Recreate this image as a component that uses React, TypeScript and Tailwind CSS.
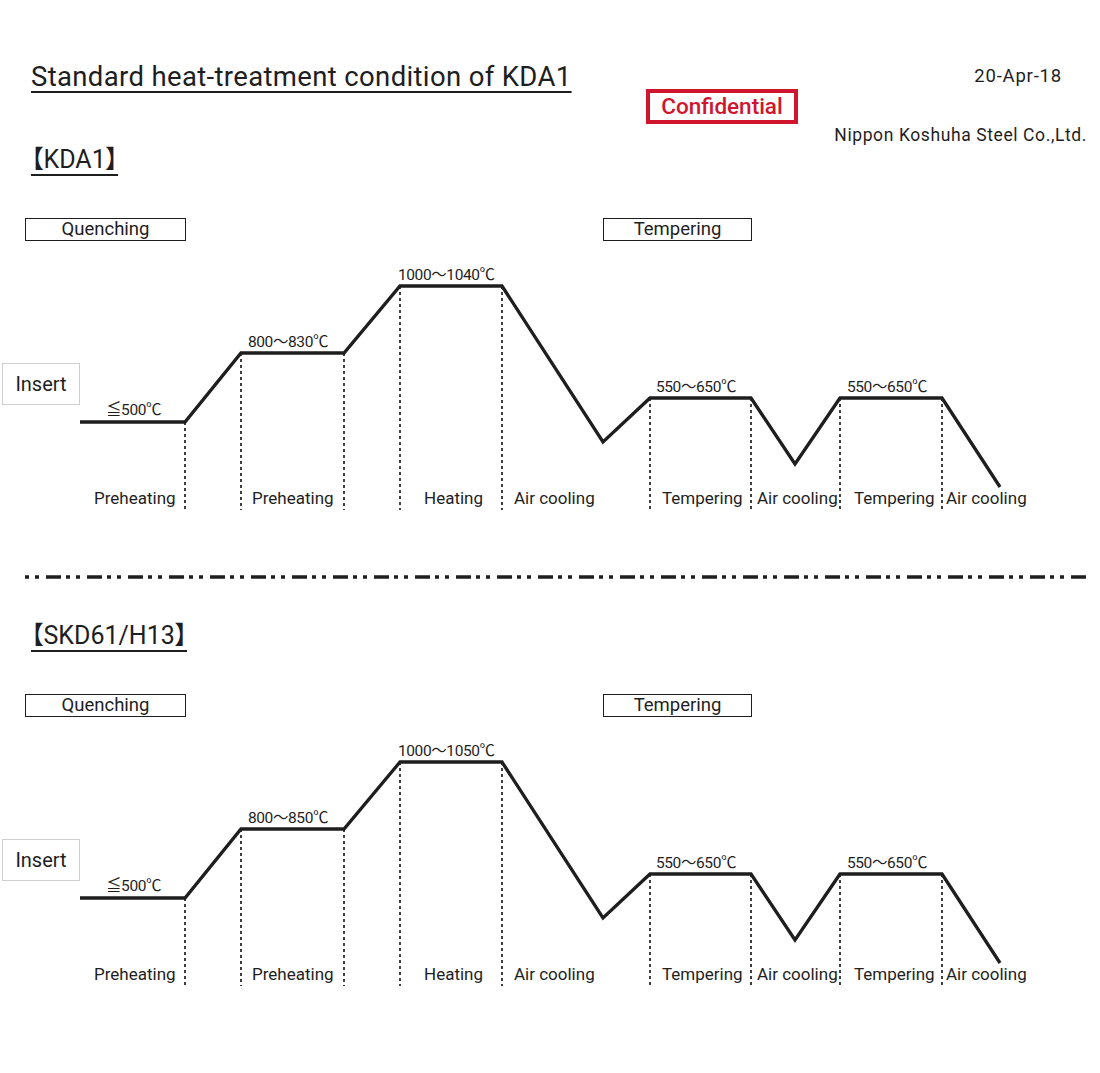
import React from "react";

type Temp = { text: string; x: number; y: number };
type DiagramProps = { temps: Temp[] };

const FONT = "font-['Roboto','Noto_Sans_CJK_JP',sans-serif]";

const points: [number, number][] = [
  [80, 172],
  [185, 172],
  [241, 103],
  [344, 103],
  [400, 36],
  [502, 36],
  [603, 192],
  [650, 148],
  [751, 148],
  [795, 214],
  [840, 148],
  [942, 148],
  [1000, 237],
];

const guides: [number, number][] = [
  [185, 172],
  [241, 103],
  [344, 103],
  [400, 36],
  [502, 36],
  [650, 148],
  [751, 148],
  [840, 148],
  [942, 148],
];

const phases: { text: string; x: number }[] = [
  { text: "Preheating", x: 94 },
  { text: "Preheating", x: 252 },
  { text: "Heating", x: 424 },
  { text: "Air cooling", x: 514 },
  { text: "Tempering", x: 662 },
  { text: "Air cooling", x: 757 },
  { text: "Tempering", x: 854 },
  { text: "Air cooling", x: 946 },
];

function Diagram({ temps }: DiagramProps) {
  return (
    <div className="relative mt-[9px] h-[272px] w-[1100px]">
      <svg
        className="absolute left-0 top-0"
        width="1100"
        height="272"
        viewBox="0 0 1100 272"
      >
        {guides.map(([x, y], i) => (
          <line
            key={i}
            x1={x}
            y1={y}
            x2={x}
            y2={260}
            stroke="#1e1e1e"
            strokeWidth="1.7"
            strokeDasharray="3 3"
          />
        ))}
        <polyline
          points={points.map((p) => p.join(",")).join(" ")}
          fill="none"
          stroke="#1e1e1e"
          strokeWidth="3.3"
          strokeLinejoin="miter"
        />
      </svg>
      <div className="absolute left-[2px] top-[113px] flex h-[42px] w-[78px] items-center justify-center border border-[#cfcfcf] bg-white text-[20px] text-[#1e1e1e]">
        Insert
      </div>
      {temps.map((t, i) => (
        <div
          key={i}
          className="absolute whitespace-nowrap text-[15.5px] leading-none tracking-[-0.4px] text-[#1e1e1e]"
          style={{ left: t.x, top: t.y }}
        >
          {t.text}
        </div>
      ))}
      {phases.map((p, i) => (
        <div
          key={i}
          className="absolute top-[240px] whitespace-nowrap text-[17px] leading-none text-[#1e1e1e]"
          style={{ left: p.x }}
        >
          {p.text}
        </div>
      ))}
    </div>
  );
}

function Section({ name, temps }: { name: string; temps: Temp[] }) {
  return (
    <section className="flex flex-col">
      <div className="ml-[31px] flex h-[30px]">
        <h2 className="border-b-[2px] border-[#1e1e1e] text-[25px] leading-[27px] text-[#1e1e1e] [font-feature-settings:'palt']">
          {name}
        </h2>
      </div>
      <div className="mt-[42px] flex">
        <div className="ml-[25px] flex h-[23px] w-[161px] items-center justify-center border-[1.5px] border-[#1e1e1e] text-[18.5px] leading-none text-[#1e1e1e]">
          Quenching
        </div>
        <div className="ml-[417px] flex h-[23px] w-[149px] items-center justify-center border-[1.5px] border-[#1e1e1e] text-[18.5px] leading-none text-[#1e1e1e]">
          Tempering
        </div>
      </div>
      <Diagram temps={temps} />
    </section>
  );
}

export default function App() {
  return (
    <div className={`h-[1073px] w-[1100px] overflow-hidden bg-white ${FONT}`}>
      <header className="relative h-[146px]">
        <div className="flex items-start justify-between pt-[62px]">
          <h1 className="ml-[31px] text-[27.5px] leading-[30px] tracking-[0.35px] text-[#1e1e1e] underline decoration-[2px] underline-offset-[5px]">
            Standard heat-treatment condition of KDA1
          </h1>
          <div className="mr-[38px] mt-[5px] text-[18.5px] leading-none tracking-[0.8px] text-[#1e1e1e]">
            20-Apr-18
          </div>
        </div>
        <div className="flex items-start">
          <div className="ml-[646px] -mt-[3px] flex h-[35px] w-[152px] items-center justify-center border-[4px] border-[#d0152f] text-[22.5px] font-medium leading-none text-[#d0152f]">
            Confidential
          </div>
        </div>
        <div className="mt-[3px] flex justify-end pr-[13px] text-[17.5px] leading-none tracking-[0.6px] text-[#1e1e1e]">
          Nippon Koshuha Steel Co.,Ltd.
        </div>
      </header>

      <Section
        name="【KDA1】"
        temps={[
          { text: "≦500℃", x: 106, y: 153 },
          { text: "800～830℃", x: 248, y: 85 },
          { text: "1000～1040℃", x: 398, y: 18 },
          { text: "550～650℃", x: 656, y: 130 },
          { text: "550～650℃", x: 847, y: 130 },
        ]}
      />

      <div className="mt-[51px] flex h-[8px] items-center">
        <svg width="1100" height="8" viewBox="0 0 1100 8">
          <line
            x1="25"
            y1="4"
            x2="1091"
            y2="4"
            stroke="#1e1e1e"
            strokeWidth="3.5"
            strokeDasharray="4 6 4 7 15 5"
          />
        </svg>
      </div>

      <div className="h-[41px]" />

      <Section
        name="【SKD61/H13】"
        temps={[
          { text: "≦500℃", x: 106, y: 153 },
          { text: "800～850℃", x: 248, y: 85 },
          { text: "1000～1050℃", x: 398, y: 18 },
          { text: "550～650℃", x: 656, y: 130 },
          { text: "550～650℃", x: 847, y: 130 },
        ]}
      />
    </div>
  );
}
